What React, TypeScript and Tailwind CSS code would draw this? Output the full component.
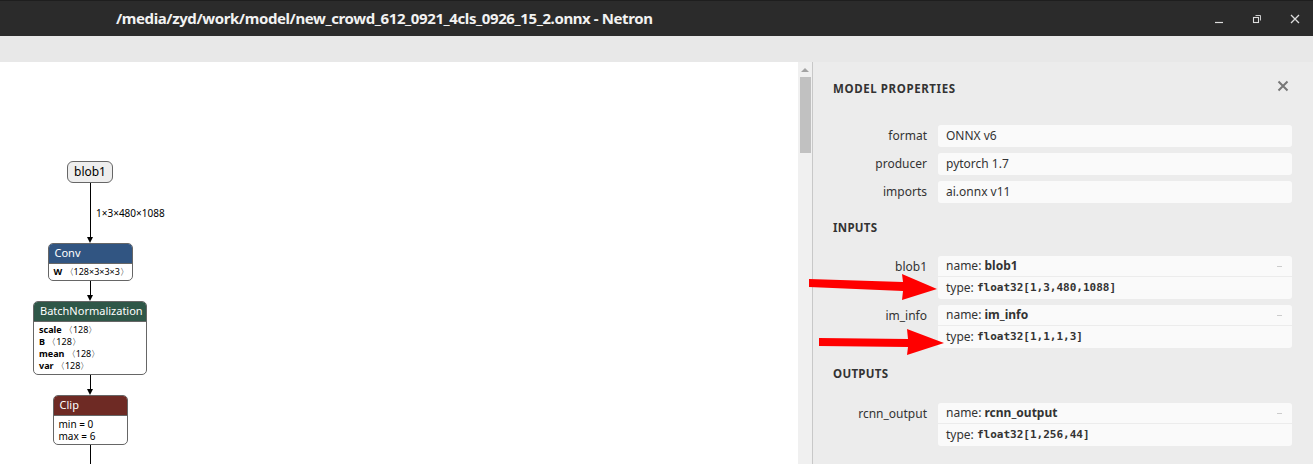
import React from 'react';

const ui = { fontFamily: '"Noto Sans", "Open Sans", sans-serif' };
const mono = { fontFamily: '"DejaVu Sans Mono", "Liberation Mono", monospace' };

const props = [
  { label: 'format', value: 'ONNX v6' },
  { label: 'producer', value: 'pytorch 1.7' },
  { label: 'imports', value: 'ai.onnx v11' },
];

const inputs = [
  { label: 'blob1', name: 'blob1', type: 'float32[1,3,480,1088]' },
  { label: 'im_info', name: 'im_info', type: 'float32[1,1,1,3]' },
];

const outputs = [{ label: 'rcnn_output', name: 'rcnn_output', type: 'float32[1,256,44]' }];

function Edge({ h, label }: { h: number; label?: string }) {
  return (
    <div className="relative flex flex-col items-center" style={{ height: h }}>
      <div className="w-px flex-1 bg-[#000]" />
      <div className="w-0 h-0 border-l-[3px] border-r-[3px] border-t-[6px] border-l-transparent border-r-transparent border-t-black" />
      {label && (
        <span className="absolute left-[9px] top-1/2 -translate-y-1/2 whitespace-nowrap text-[10px] text-black">{label}</span>
      )}
    </div>
  );
}

function OpNode({
  title,
  color,
  width,
  rows,
  big,
}: {
  title: string;
  color: string;
  width: number;
  rows: React.ReactNode[];
  big?: boolean;
}) {
  return (
    <div className="rounded-[5px] border border-[#666] overflow-hidden bg-white" style={{ width }}>
      <div className="h-[19px] flex items-center px-[6px] text-[11px] text-white" style={{ background: color }}>
        {title}
      </div>
      <div
        className={
          big
            ? 'border-t border-[#666] px-[5px] py-[2px] flex flex-col text-[10px] leading-[12px] text-black'
            : 'border-t border-[#666] px-[5px] py-[2px] flex flex-col text-[9px] leading-[12px] text-black'
        }
      >
        {rows.map((r, i) => (
          <div key={i} className="whitespace-nowrap">{r}</div>
        ))}
      </div>
    </div>
  );
}

function Attr({ k, v }: { k: string; v: string }) {
  return (
    <>
      <b>{k}</b> {'\u3008'}{v}{'\u3009'}
    </>
  );
}

function PropRow({ label, value }: { label: string; value: string }) {
  return (
    <div className="flex items-center h-[22px]">
      <div className="w-[95px] text-right pr-[1px] text-[12px] text-[#333]">{label}</div>
      <div className="ml-[10px] flex-1 h-[22px] rounded-[3px] bg-[#fafafa] flex items-center px-[8px] text-[12px] text-[#333]">
        {value}
      </div>
    </div>
  );
}

function ArgRow({ label, name, type }: { label: string; name: string; type: string }) {
  return (
    <div className="flex items-start">
      <div className="w-[95px] h-[21px] flex items-center justify-end pr-[1px] text-[12px] text-[#333]">{label}</div>
      <div className="ml-[10px] flex-1 rounded-[3px] bg-[#fafafa] text-[12px] text-[#333]">
        <div className="h-[21px] flex items-center px-[8px] border-b border-[#ececec]">
          <span>name:&nbsp;</span>
          <b>{name}</b>
          <span className="ml-auto mr-[2px] w-[5px] h-px bg-[#ccc]" />
        </div>
        <div className="h-[22px] flex items-center px-[8px]">
          <span>type:&nbsp;</span>
          <b className="text-[11px]" style={mono}>{type}</b>
        </div>
      </div>
    </div>
  );
}

function Section({ title }: { title: string }) {
  return <div className="h-[18px] flex items-center text-[11.5px] font-bold text-[#333] tracking-[0.3px]">{title}</div>;
}

export default function App() {
  return (
    <div className="relative w-[1313px] h-[464px] overflow-hidden flex flex-col" style={ui}>
      {/* title bar */}
      <div className="h-[36px] bg-[#2b2b2b] border-t border-[#1e1e1e] flex items-center relative">
        <div className="pl-[116px] text-[15px] font-bold text-[#f2f2f2] tracking-[-0.4px]">
          /media/zyd/work/model/new_crowd_612_0921_4cls_0926_15_2.onnx - Netron
        </div>
        <div className="ml-auto flex items-center gap-[28px] pr-[13px] text-[#ddd]">
          <svg width="10" height="10" viewBox="0 0 10 10">
            <path d="M1 8.5h8" stroke="#ddd" strokeWidth="1.2" />
          </svg>
          <svg width="10" height="10" viewBox="0 0 10 10">
            <rect x="1.5" y="3.5" width="5" height="5" fill="none" stroke="#ddd" strokeWidth="1.1" />
            <path d="M3.5 1.5h5v5" fill="none" stroke="#ddd" strokeWidth="0.9" />
          </svg>
          <svg width="10" height="10" viewBox="0 0 10 10">
            <path d="M1 1l8 8M9 1l-8 8" stroke="#ddd" strokeWidth="1.3" />
          </svg>
        </div>
      </div>
      {/* toolbar */}
      <div className="h-[26px] bg-[#e8e8e8]" />

      <div className="flex-1 flex min-h-0">
        {/* graph canvas */}
        <div className="w-[798px] bg-white pt-[99px]">
          <div className="w-[180px] flex flex-col items-center">
            <div className="h-[22px] px-[6px] rounded-[6px] border border-[#666] bg-[#eee] flex items-center text-[12px] text-black">
              blob1
            </div>
            <Edge h={60} label={'1\u00d73\u00d7480\u00d71088'} />
            <OpNode title="Conv" color="#315582" width={85} rows={[<Attr k="W" v={'128\u00d73\u00d73\u00d73'} />]} />
            <Edge h={20} />
            <OpNode
              title="BatchNormalization"
              color="#2f5748"
              width={114}
              rows={[
                <Attr k="scale" v="128" />,
                <Attr k="B" v="128" />,
                <Attr k="mean" v="128" />,
                <Attr k="var" v="128" />,
              ]}
            />
            <Edge h={20} />
            <OpNode title="Clip" color="#6e2a24" width={75} rows={['min = 0', 'max = 6']} big />
            <Edge h={30} />
          </div>
        </div>
        {/* scrollbar */}
        <div className="w-[14px] bg-[#f0f0f0] flex flex-col items-center pt-[6px]">
          <div className="w-0 h-0 border-l-[4px] border-r-[4px] border-b-[4px] border-l-transparent border-r-transparent border-b-[#a3a3a3]" />
          <div className="mt-[5px] w-[11px] h-[76px] bg-[#c1c1c1]" />
        </div>
        <div className="w-px bg-[#c8c8c8]" />
        {/* sidebar */}
        <div className="flex-1 bg-[#ececec] pl-[20px] pr-[21px]">
          <div className="h-[52px] flex items-center justify-between">
            <span className="text-[11.5px] font-bold text-[#333] tracking-[0.6px] mt-[2px]">MODEL PROPERTIES</span>
            <svg width="12" height="12" viewBox="0 0 12 12" className="mr-[3px] -mt-[4px]">
              <path d="M1.5 1.5l9 9M10.5 1.5l-9 9" stroke="#777" strokeWidth="2" />
            </svg>
          </div>
          <div className="mt-[11px] flex flex-col gap-[6px]">
            {props.map((p) => (
              <PropRow key={p.label} {...p} />
            ))}
          </div>
          <div className="mt-[16px]">
            <Section title="INPUTS" />
          </div>
          <div className="mt-[19px] flex flex-col gap-[6px]">
            {inputs.map((a) => (
              <ArgRow key={a.label} {...a} />
            ))}
          </div>
          <div className="mt-[17px]">
            <Section title="OUTPUTS" />
          </div>
          <div className="mt-[20px] flex flex-col gap-[6px]">
            {outputs.map((a) => (
              <ArgRow key={a.label} {...a} />
            ))}
          </div>
        </div>
      </div>

      {/* red annotation arrows */}
      <svg className="absolute inset-0 pointer-events-none" width="1313" height="464">
        <polygon points="809,279 903,282 902,274 937,289 902,300 903,291 809,287" fill="#ff0000" />
        <polygon points="819,338 908,339 907,329 944,343 907,355 908,347 819,346" fill="#ff0000" />
      </svg>
    </div>
  );
}
